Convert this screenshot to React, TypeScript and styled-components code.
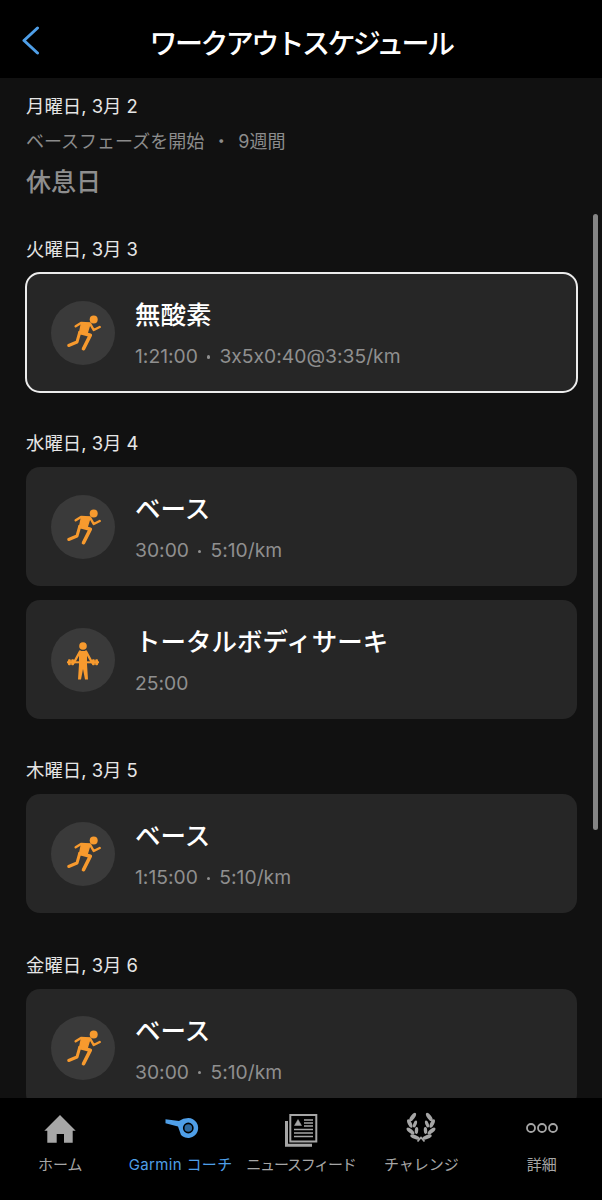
import * as React from "react";
import styled, { createGlobalStyle } from "styled-components";

const FONT = `Inter, "Noto Sans CJK JP", sans-serif`;

const GlobalStyle = createGlobalStyle`
  html, body {
    margin: 0;
    padding: 0;
    background: #000;
  }
  * {
    box-sizing: border-box;
  }
`;

const Page = styled.div`
  display: flex;
  flex-direction: column;
  width: 602px;
  height: 1200px;
  overflow: hidden;
  font-family: ${FONT};
  font-feature-settings: "calt" 0;
  background: #000;
`;

const Header = styled.header`
  display: flex;
  align-items: center;
  justify-content: center;
  flex: 0 0 78px;
  padding-top: 10px;
  position: relative;
  background: #000;
`;

const BackButton = styled.svg`
  position: absolute;
  left: 21px;
  top: 26px;
`;

const Title = styled.h1`
  margin: 0;
  font-size: 28px;
  font-weight: 500;
  line-height: 34px;
  color: #fff;
  letter-spacing: -2.6px;
`;

const Main = styled.main`
  flex: 1;
  min-height: 0;
  position: relative;
  overflow: hidden;
  padding: 16px 25px 0 26px;
  background: #111;
  display: flex;
  flex-direction: column;
  gap: 39.15px;
`;

const ScrollThumb = styled.div`
  position: absolute;
  left: 592.5px;
  top: 136px;
  width: 5px;
  height: 616px;
  border-radius: 3px;
  background: #858585;
`;

const Section = styled.section`
  display: flex;
  flex-direction: column;
  flex-shrink: 0;
`;

const DayLabel = styled.div`
  font-size: 18.4px;
  line-height: 24px;
  color: #e6e6e6;
  margin-bottom: 12px;
`;

const PhaseNote = styled.div`
  font-size: 18px;
  line-height: 24px;
  word-spacing: 3px;
  color: #8c8c8c;
  margin-bottom: 13px;
`;

const RestDay = styled.div`
  font-size: 25px;
  line-height: 31px;
  font-weight: 500;
  color: #8e8e8e;
`;

const CardStack = styled.div`
  display: flex;
  flex-direction: column;
  gap: 14px;
`;

const Card = styled.div<{ $selected?: boolean }>`
  display: flex;
  align-items: center;
  gap: 20px;
  height: 119px;
  padding-left: 25px;
  border-radius: 14px;
  background: #262626;
  outline: ${(props) => (props.$selected ? "2px solid #ececec" : "none")};
  outline-offset: -1px;
`;

const IconCircle = styled.div`
  display: flex;
  align-items: center;
  justify-content: center;
  flex: 0 0 64px;
  height: 64px;
  border-radius: 50%;
  background: #3a3a3a;
`;

const CardText = styled.div`
  display: flex;
  flex-direction: column;
  gap: 11px;
`;

const CardTitle = styled.div`
  font-size: 25.5px;
  line-height: 36px;
  font-weight: 500;
  color: #fff;
`;

const CardMeta = styled.div`
  display: flex;
  align-items: center;
  font-size: 19.3px;
  line-height: 24px;
  color: #8f8f8f;
`;

const MetaDot = styled.span`
  flex: 0 0 3.5px;
  height: 3.5px;
  margin: 2px 9px 0 9px;
  border-radius: 50%;
  background: #8f8f8f;
`;

const BottomNav = styled.nav`
  display: grid;
  grid-template-columns: repeat(5, 1fr);
  flex: 0 0 102px;
  padding-top: 13px;
  background: #000;
`;

const NavItem = styled.div<{ $active?: boolean }>`
  display: flex;
  flex-direction: column;
  align-items: center;
  gap: 7px;
  color: ${(props) => (props.$active ? "#4f9fe8" : "#a6a6a6")};
`;

const NavLabel = styled.div<{ $tracking?: number }>`
  font-size: 15px;
  line-height: 22px;
  white-space: nowrap;
  letter-spacing: ${(props) => props.$tracking ?? 0}px;
`;

const RunIcon = () => (
  <svg width="40" height="40" viewBox="0 0 40 40" fill="none" stroke="#f79a2e" strokeLinecap="round" strokeLinejoin="round">
    <circle cx="30.7" cy="6.6" r="4" fill="#f79a2e" stroke="none" />
    <path d="M12.7 13.3 L18 10 L27 10.5 L30.7 17 L36.7 14" strokeWidth="2.5" />
    <path d="M18.5 10.5 L27 10.5 L24 20.5 L16.5 20.5 Z" fill="#f79a2e" strokeWidth="1.5" />
    <path d="M17 19.5 L27.3 22.3 L20.5 35.7" strokeWidth="3.6" />
    <path d="M16.7 19.5 L14 29 L5.7 32.5" strokeWidth="3" />
  </svg>
);

const LiftIcon = () => (
  <svg width="40" height="40" viewBox="0 0 40 40" fill="#f79a2e">
    <circle cx="20" cy="6" r="3.8" />
    <path d="M16 11 H24 V24 L25 39.5 H22 L20 29 L18 39.5 H15 L16 24 Z" />
    <path d="M17 11.5 L11 22.5 M23 11.5 L29 22.5" stroke="#f79a2e" strokeWidth="2.4" strokeLinecap="round" />
    <rect x="4" y="21.3" width="32" height="2" />
    <rect x="5" y="19.3" width="2.8" height="6" rx="1" />
    <rect x="8.2" y="19.3" width="2.8" height="6" rx="1" />
    <rect x="29" y="19.3" width="2.8" height="6" rx="1" />
    <rect x="32.2" y="19.3" width="2.8" height="6" rx="1" />
  </svg>
);

const HomeIcon = () => (
  <svg width="36" height="36" viewBox="0 0 36 36" fill="currentColor">
    <path d="M18 4 L33.7 19.7 H30.7 V31.7 H22 V23 H14.7 V31.7 H5.3 V19.7 H2.3 Z" />
  </svg>
);

const WhistleIcon = () => (
  <svg width="36" height="36" viewBox="0 0 36 36" fill="currentColor">
    <path d="M2.5 8.3 L16 10 Q20 7 25.3 7 A10 10 0 1 1 18 24 L15 15.5 L2.5 12.3 Z" />
    <circle cx="25.3" cy="17" r="4.6" fill="#2f6a9f" stroke="#000" strokeWidth="1.6" />
  </svg>
);

const NewsIcon = () => (
  <svg width="36" height="36" viewBox="0 0 36 36" fill="none" stroke="currentColor">
    <path d="M3.5 10 V34.2 H29" strokeWidth="3" />
    <rect x="7.3" y="4" width="26" height="26.5" strokeWidth="2" fill="#000" />
    <path d="M11.5 14.5 L15 8.5 L18.5 14.5 Z" fill="currentColor" strokeWidth="0.5" />
    <path d="M21 9 H30 M21 12 H30 M21 15 H30 M11 18.5 H30 M11 22 H30 M11 25.5 H30" strokeWidth="1.4" />
  </svg>
);

const LaurelSide = () => (
  <g fill="currentColor">
    <ellipse cx="9.7" cy="6" rx="2" ry="5" transform="rotate(35 9.7 6)" />
    <ellipse cx="6.8" cy="12.5" rx="2" ry="4.6" transform="rotate(-25 6.8 12.5)" />
    <ellipse cx="12" cy="13" rx="1.7" ry="3.6" transform="rotate(20 12 13)" />
    <ellipse cx="7.5" cy="20" rx="2" ry="4.8" transform="rotate(-50 7.5 20)" />
    <ellipse cx="13.5" cy="19.5" rx="1.7" ry="3.4" transform="rotate(5 13.5 19.5)" />
    <ellipse cx="12" cy="26" rx="2" ry="5" transform="rotate(-68 12 26)" />
  </g>
);

const LaurelIcon = () => (
  <svg width="36" height="36" viewBox="0 0 36 36">
    <LaurelSide />
    <g transform="matrix(-1 0 0 1 36 0)">
      <LaurelSide />
    </g>
    <path d="M14.5 30.5 L18 26.5 L21.5 30.5" fill="none" stroke="currentColor" strokeWidth="1.8" />
  </svg>
);

const MoreIcon = () => (
  <svg width="36" height="36" viewBox="0 0 36 36" fill="none" stroke="currentColor" strokeWidth="1.8">
    <circle cx="7" cy="17" r="4" />
    <circle cx="18" cy="17" r="4" />
    <circle cx="29" cy="17" r="4" />
  </svg>
);

interface Workout {
  title: string;
  duration: string;
  target?: string;
  kind: "run" | "lift";
  selected?: boolean;
}

const days: { label: string; workouts: Workout[] }[] = [
  {
    label: "火曜日, 3月 3",
    workouts: [{ title: "無酸素", duration: "1:21:00", target: "3x5x0:40@3:35/km", kind: "run", selected: true }],
  },
  {
    label: "水曜日, 3月 4",
    workouts: [
      { title: "ベース", duration: "30:00", target: "5:10/km", kind: "run" },
      { title: "トータルボディサーキ", duration: "25:00", kind: "lift" },
    ],
  },
  {
    label: "木曜日, 3月 5",
    workouts: [{ title: "ベース", duration: "1:15:00", target: "5:10/km", kind: "run" }],
  },
  {
    label: "金曜日, 3月 6",
    workouts: [{ title: "ベース", duration: "30:00", target: "5:10/km", kind: "run" }],
  },
];

const tabs = [
  { label: "ホーム", icon: <HomeIcon /> },
  { label: "Garmin コーチ", icon: <WhistleIcon />, active: true, tracking: 0.35 },
  { label: "ニュースフィード", icon: <NewsIcon />, tracking: -1.2 },
  { label: "チャレンジ", icon: <LaurelIcon /> },
  { label: "詳細", icon: <MoreIcon /> },
];

export default function App() {
  return (
    <Page>
      <GlobalStyle />
      <Header>
        <BackButton width="20" height="30" viewBox="0 0 20 30" fill="none" stroke="#4f9fe8" strokeWidth="3" strokeLinecap="round" strokeLinejoin="round">
          <path d="M16.5 2 L3 14.5 L16.5 27" />
        </BackButton>
        <Title>ワークアウトスケジュール</Title>
      </Header>
      <Main>
        <ScrollThumb />
        <Section>
          <DayLabel>月曜日, 3月 2</DayLabel>
          <PhaseNote>ベースフェーズを開始 ・ 9週間</PhaseNote>
          <RestDay>休息日</RestDay>
        </Section>
        {days.map((day) => (
          <Section key={day.label}>
            <DayLabel>{day.label}</DayLabel>
            <CardStack>
              {day.workouts.map((workout) => (
                <Card key={workout.title} $selected={workout.selected}>
                  <IconCircle>{workout.kind === "run" ? <RunIcon /> : <LiftIcon />}</IconCircle>
                  <CardText>
                    <CardTitle>{workout.title}</CardTitle>
                    <CardMeta>
                      {workout.duration}
                      {workout.target && <MetaDot />}
                      {workout.target}
                    </CardMeta>
                  </CardText>
                </Card>
              ))}
            </CardStack>
          </Section>
        ))}
      </Main>
      <BottomNav>
        {tabs.map((tab) => (
          <NavItem key={tab.label} $active={tab.active}>
            {tab.icon}
            <NavLabel $tracking={tab.tracking}>{tab.label}</NavLabel>
          </NavItem>
        ))}
      </BottomNav>
    </Page>
  );
}
